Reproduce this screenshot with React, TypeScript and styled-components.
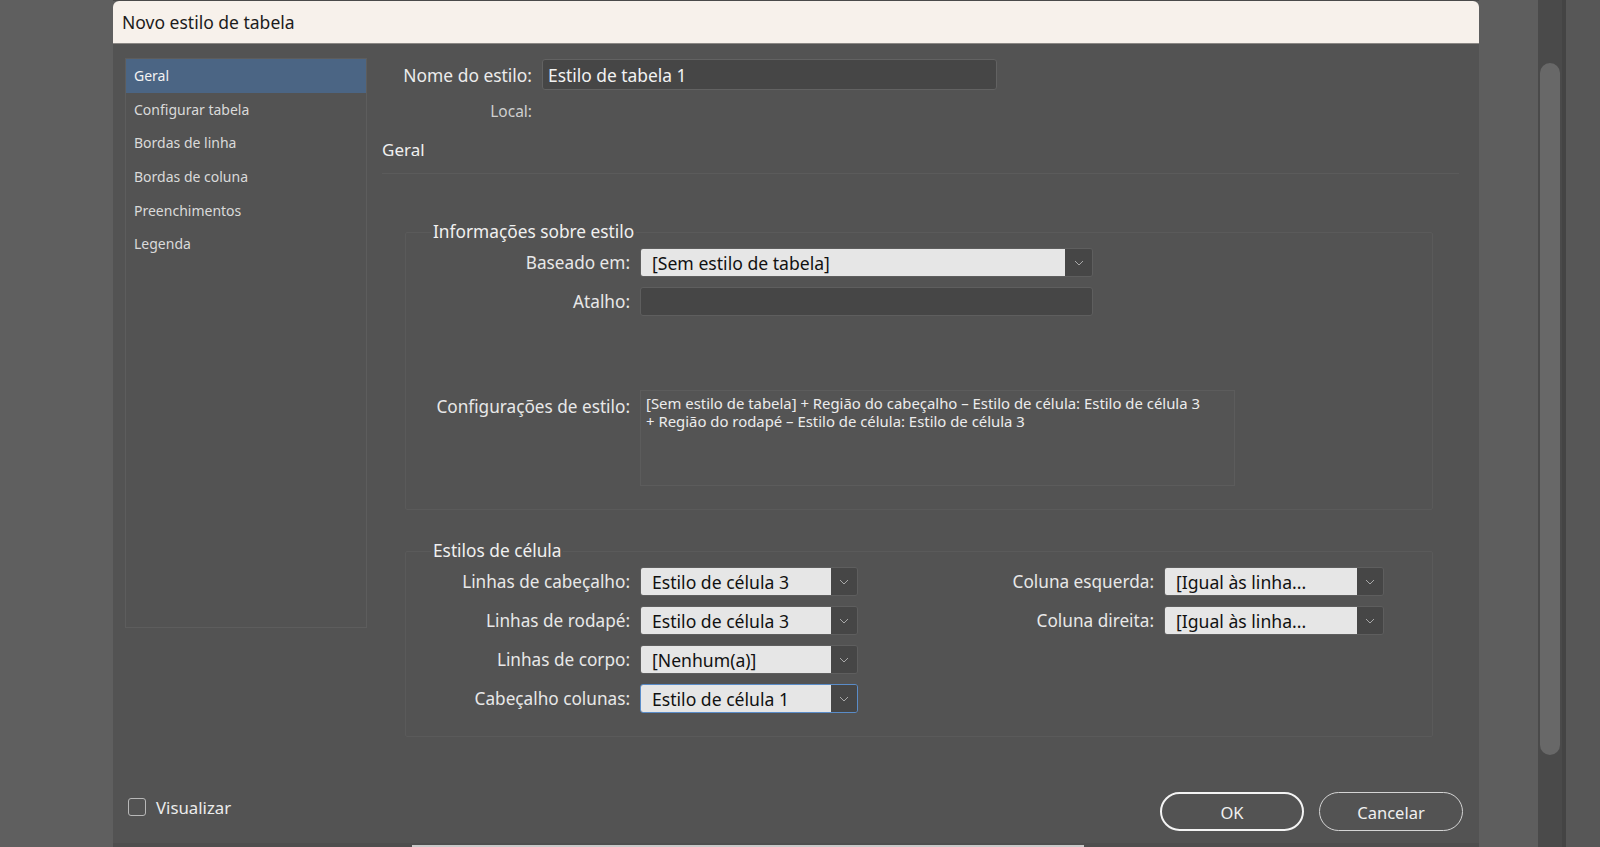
import React from "react";
import styled, { createGlobalStyle } from "styled-components";

const GlobalStyle = createGlobalStyle`
  html, body {
    margin: 0;
    padding: 0;
    width: 1600px;
    height: 847px;
    overflow: hidden;
    background: #5f5f5f;
    font-family: "Noto Sans", "Open Sans", sans-serif;
  }
  * {
    box-sizing: border-box;
  }
`;

const navItems = [
  "Geral",
  "Configurar tabela",
  "Bordas de linha",
  "Bordas de coluna",
  "Preenchimentos",
  "Legenda",
];

const Chevron = () => (
  <svg width="10" height="6" viewBox="0 0 10 6">
    <polyline points="1,1 5,5 9,1" fill="none" stroke="#a8a8a8" strokeWidth="1" />
  </svg>
);

type SelectProps = {
  value: string;
  focused?: boolean;
  arrowWidth?: number;
};

const Select: React.FC<SelectProps> = ({ value, focused, arrowWidth = 26 }) => (
  <SelectBox $focused={focused}>
    <SelectValue>{value}</SelectValue>
    <SelectArrow $width={arrowWidth}>
      <Chevron />
    </SelectArrow>
  </SelectBox>
);

const App: React.FC = () => {
  return (
    <>
      <GlobalStyle />
      <Page>
        <LeftGutter />
        <DialogColumn>
          <TopEdge />
          <Dialog>
            <TitleBar>Novo estilo de tabela</TitleBar>
            <Body>
              <NavList>
                {navItems.map((item, i) => (
                  <NavItem key={item} $active={i === 0}>
                    {item}
                  </NavItem>
                ))}
              </NavList>

              <Content>
                <NameRow>
                  <TopLabel>Nome do estilo:</TopLabel>
                  <NameInput>Estilo de tabela 1</NameInput>
                </NameRow>
                <LocalRow>
                  <LocalLabel>Local:</LocalLabel>
                </LocalRow>
                <SectionTitle>Geral</SectionTitle>
                <Divider />

                <Group $top={47}>
                  <Legend>Informações sobre estilo</Legend>
                  <FormRow>
                    <FieldLabel>Baseado em:</FieldLabel>
                    <WideControl>
                      <Select value="[Sem estilo de tabela]" arrowWidth={27} />
                    </WideControl>
                  </FormRow>
                  <FormRow $gap={10}>
                    <FieldLabel>Atalho:</FieldLabel>
                    <WideControl>
                      <ShortcutInput />
                    </WideControl>
                  </FormRow>
                  <SettingsRow>
                    <FieldLabel>Configurações de estilo:</FieldLabel>
                    <SettingsText>
                      [Sem estilo de tabela] + Região do cabeçalho – Estilo de célula: Estilo de célula 3
                      <br />+ Região do rodapé – Estilo de célula: Estilo de célula 3
                    </SettingsText>
                  </SettingsRow>
                </Group>

                <Group $top={30}>
                  <Legend>Estilos de célula</Legend>
                  <CellGrid>
                    <FieldLabel>Linhas de cabeçalho:</FieldLabel>
                    <Select value="Estilo de célula 3" />
                    <FieldLabel>Coluna esquerda:</FieldLabel>
                    <Select value="[Igual às linha..." />

                    <FieldLabel>Linhas de rodapé:</FieldLabel>
                    <Select value="Estilo de célula 3" />
                    <FieldLabel>Coluna direita:</FieldLabel>
                    <Select value="[Igual às linha..." />

                    <FieldLabel>Linhas de corpo:</FieldLabel>
                    <Select value="[Nenhum(a)]" />
                    <span />
                    <span />

                    <FieldLabel>Cabeçalho colunas:</FieldLabel>
                    <Select value="Estilo de célula 1" focused />
                  </CellGrid>
                </Group>
              </Content>
            </Body>

            <Footer>
              <PreviewToggle>
                <CheckBox />
                <span>Visualizar</span>
              </PreviewToggle>
              <Buttons>
                <PillButton $primary>OK</PillButton>
                <PillButton>Cancelar</PillButton>
              </Buttons>
            </Footer>
          </Dialog>
          <BottomEdge>
            <BackStrip />
          </BottomEdge>
        </DialogColumn>

        <RightPane>
          <RightSpacer />
          <ScrollTrack>
            <ScrollThumb />
          </ScrollTrack>
          <PaneSeparator />
          <PaneRest />
        </RightPane>
      </Page>
    </>
  );
};

export default App;

const Page = styled.div`
  display: flex;
  width: 1600px;
  height: 847px;
`;

const LeftGutter = styled.div`
  width: 113px;
  flex-shrink: 0;
  background: #5f5f5f;
`;

const DialogColumn = styled.div`
  width: 1366px;
  display: flex;
  flex-direction: column;
  flex-shrink: 0;
`;

const TopEdge = styled.div`
  height: 1px;
  background: #4a4a4a;
`;

const Dialog = styled.div`
  height: 842px;
  display: flex;
  flex-direction: column;
  background: #535353;
  border-radius: 6px 6px 0 0;
  overflow: hidden;
  box-shadow: 0 1px 0 #494949;
`;

const TitleBar = styled.div`
  height: 43px;
  flex-shrink: 0;
  display: flex;
  align-items: center;
  padding: 0 0 1px 9px;
  background: #f7f1eb;
  border-bottom: 1px solid #8a8784;
  color: #1c1c1c;
  font-size: 17.5px;
`;

const Body = styled.div`
  flex: 1;
  display: grid;
  grid-template-columns: 242px 1fr;
  column-gap: 15px;
  padding: 14px 20px 0 12px;
`;

const NavList = styled.div`
  height: 570px;
  border: 1px solid #5d5d5d;
  display: flex;
  flex-direction: column;
`;

const NavItem = styled.div<{ $active?: boolean }>`
  height: 33.6px;
  flex-shrink: 0;
  display: flex;
  align-items: center;
  padding: 0 0 0 8px;
  font-size: 14px;
  color: ${(p) => (p.$active ? "#f2f2f2" : "#dadada")};
  background: ${(p) => (p.$active ? "#4b6584" : "transparent")};
`;

const Content = styled.div`
  display: flex;
  flex-direction: column;
  padding-top: 1px;
  color: #e8e8e8;
`;

const NameRow = styled.div`
  display: flex;
  align-items: center;
  gap: 10px;
`;

const TopLabel = styled.div`
  width: 150px;
  text-align: right;
  font-size: 17.4px;
  color: #ececec;
`;

const NameInput = styled.div`
  width: 455px;
  height: 31px;
  display: flex;
  align-items: center;
  padding-left: 5px;
  background: #464646;
  border: 1px solid #626262;
  border-radius: 3px;
  font-size: 17.4px;
  color: #f2f2f2;
`;

const LocalRow = styled.div`
  display: flex;
  height: 20px;
  margin-top: 11px;
  align-items: center;
`;

const LocalLabel = styled.div`
  width: 150px;
  text-align: right;
  font-size: 15.5px;
  color: #cfcfcf;
`;

const SectionTitle = styled.div`
  margin-top: 18px;
  line-height: 22px;
  font-size: 17px;
  color: #f0f0f0;
`;

const Divider = styled.div`
  margin-top: 12px;
  border-top: 1px solid #5b5b5b;
`;

const Group = styled.fieldset<{ $top: number }>`
  margin: ${(p) => p.$top}px 26px 0 23px;
  padding: 5px 0 23px 0;
  min-width: 0;
  border: 1px solid #5a5a5a;
  border-radius: 2px;
`;

const Legend = styled.legend`
  margin-left: 25px;
  padding: 0 2px;
  line-height: 22px;
  font-size: 17.3px;
  color: #f0f0f0;
`;

const FormRow = styled.div<{ $gap?: number }>`
  display: flex;
  align-items: center;
  gap: 10px;
  margin-top: ${(p) => p.$gap ?? 0}px;
`;

const FieldLabel = styled.div`
  width: 224px;
  flex-shrink: 0;
  text-align: right;
  font-size: 17.2px;
  color: #e8e8e8;
  white-space: nowrap;
`;

const WideControl = styled.div`
  width: 453px;
`;

const SelectBox = styled.div<{ $focused?: boolean }>`
  display: flex;
  height: 29px;
  border: 1px solid ${(p) => (p.$focused ? "#5a8cc8" : "#5e5e5e")};
  border-radius: 3px;
  overflow: hidden;
`;

const SelectValue = styled.div`
  flex: 1;
  display: flex;
  align-items: center;
  padding-left: 11px;
  background: #e6e6e6;
  color: #111111;
  font-size: 17.6px;
  white-space: nowrap;
`;

const SelectArrow = styled.div<{ $width: number }>`
  width: ${(p) => p.$width}px;
  display: flex;
  align-items: center;
  justify-content: center;
  background: #464646;
`;

const ShortcutInput = styled.div`
  height: 29px;
  background: #464646;
  border: 1px solid #5e5e5e;
  border-radius: 3px;
`;

const SettingsRow = styled.div`
  display: flex;
  align-items: flex-start;
  gap: 10px;
  margin-top: 74px;

  & > ${FieldLabel} {
    padding-top: 5px;
  }
`;

const SettingsText = styled.div`
  width: 595px;
  height: 96px;
  padding: 4px 5px;
  border: 1px solid #5c5c5c;
  background: #545454;
  font-size: 14.9px;
  line-height: 17.5px;
  color: #ececec;
  white-space: nowrap;
`;

const CellGrid = styled.div`
  display: grid;
  grid-template-columns: 224px 218px 286px 220px;
  grid-auto-rows: 29px;
  column-gap: 10px;
  row-gap: 10px;
  align-items: center;

  & > ${FieldLabel} {
    width: auto;
  }
`;

const Footer = styled.div`
  height: 68px;
  flex-shrink: 0;
  display: flex;
  align-items: center;
  padding: 17px 16px 12px 15px;
`;

const PreviewToggle = styled.label`
  display: flex;
  align-items: center;
  gap: 10px;
  margin-bottom: 9px;
  font-size: 16.8px;
  color: #ececec;
`;

const CheckBox = styled.span`
  width: 18px;
  height: 18px;
  border: 1.5px solid #b8b8b8;
  border-radius: 3px;
`;

const Buttons = styled.div`
  margin-left: auto;
  display: flex;
  gap: 15px;
`;

const PillButton = styled.button<{ $primary?: boolean }>`
  width: 144px;
  height: 39px;
  padding-top: 2px;
  border-radius: 20px;
  background: transparent;
  border: ${(p) => (p.$primary ? "2px solid #f4f4f4" : "1px solid #d4d4d4")};
  color: #f0f0f0;
  font-family: inherit;
  font-size: 16.5px;
  cursor: pointer;
`;

const BottomEdge = styled.div`
  flex: 1;
  display: flex;
  align-items: flex-end;
  padding-left: 299px;
  background: #4e4e4e;
`;

const BackStrip = styled.div`
  width: 672px;
  height: 2px;
  background: #c9c9c9;
`;

const RightPane = styled.div`
  flex: 1;
  display: flex;
`;

const RightSpacer = styled.div`
  width: 59px;
  background: #5e5e5e;
`;

const ScrollTrack = styled.div`
  width: 24px;
  padding: 63px 2px 0;
  background: #4a4a4a;
`;

const ScrollThumb = styled.div`
  height: 692px;
  border-radius: 10px;
  background: #686868;
`;

const PaneSeparator = styled.div`
  width: 4px;
  background: #444444;
`;

const PaneRest = styled.div`
  flex: 1;
  background: #575757;
`;
